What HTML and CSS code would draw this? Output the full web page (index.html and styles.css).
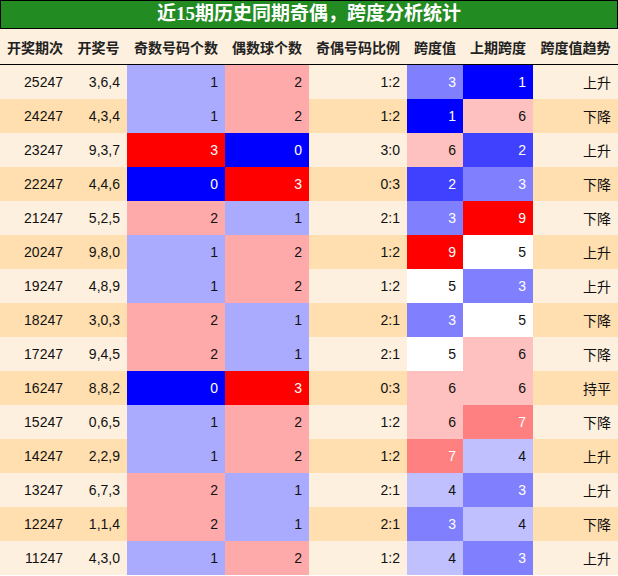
FILE: index.html
```html
<!DOCTYPE html>
<html lang="zh">
<head>
<meta charset="utf-8">
<title>近15期历史同期奇偶，跨度分析统计</title>
<link rel="stylesheet" href="styles.css">
</head>
<body>
<div class="title">近15期历史同期奇偶，跨度分析统计</div>
<table class="stats">
<colgroup>
<col class="w1"><col class="w2"><col class="w3"><col class="w4"><col class="w5"><col class="w6"><col class="w7"><col class="w8">
</colgroup>
<thead>
<tr><th>开奖期次</th><th>开奖号</th><th>奇数号码个数</th><th>偶数球个数</th><th>奇偶号码比例</th><th>跨度值</th><th>上期跨度</th><th>跨度值趋势</th></tr>
</thead>
<tbody>
<tr><td>25247</td><td>3,6,4</td><td class="n1">1</td><td class="n2">2</td><td>1:2</td><td class="s3">3</td><td class="s1">1</td><td>上升</td></tr>
<tr><td>24247</td><td>4,3,4</td><td class="n1">1</td><td class="n2">2</td><td>1:2</td><td class="s1">1</td><td class="s6">6</td><td>下降</td></tr>
<tr><td>23247</td><td>9,3,7</td><td class="n3">3</td><td class="n0">0</td><td>3:0</td><td class="s6">6</td><td class="s2">2</td><td>上升</td></tr>
<tr><td>22247</td><td>4,4,6</td><td class="n0">0</td><td class="n3">3</td><td>0:3</td><td class="s2">2</td><td class="s3">3</td><td>下降</td></tr>
<tr><td>21247</td><td>5,2,5</td><td class="n2">2</td><td class="n1">1</td><td>2:1</td><td class="s3">3</td><td class="s9">9</td><td>下降</td></tr>
<tr><td>20247</td><td>9,8,0</td><td class="n1">1</td><td class="n2">2</td><td>1:2</td><td class="s9">9</td><td class="s5">5</td><td>上升</td></tr>
<tr><td>19247</td><td>4,8,9</td><td class="n1">1</td><td class="n2">2</td><td>1:2</td><td class="s5">5</td><td class="s3">3</td><td>上升</td></tr>
<tr><td>18247</td><td>3,0,3</td><td class="n2">2</td><td class="n1">1</td><td>2:1</td><td class="s3">3</td><td class="s5">5</td><td>下降</td></tr>
<tr><td>17247</td><td>9,4,5</td><td class="n2">2</td><td class="n1">1</td><td>2:1</td><td class="s5">5</td><td class="s6">6</td><td>下降</td></tr>
<tr><td>16247</td><td>8,8,2</td><td class="n0">0</td><td class="n3">3</td><td>0:3</td><td class="s6">6</td><td class="s6">6</td><td>持平</td></tr>
<tr><td>15247</td><td>0,6,5</td><td class="n1">1</td><td class="n2">2</td><td>1:2</td><td class="s6">6</td><td class="s7">7</td><td>下降</td></tr>
<tr><td>14247</td><td>2,2,9</td><td class="n1">1</td><td class="n2">2</td><td>1:2</td><td class="s7">7</td><td class="s4">4</td><td>上升</td></tr>
<tr><td>13247</td><td>6,7,3</td><td class="n2">2</td><td class="n1">1</td><td>2:1</td><td class="s4">4</td><td class="s3">3</td><td>上升</td></tr>
<tr><td>12247</td><td>1,1,4</td><td class="n2">2</td><td class="n1">1</td><td>2:1</td><td class="s3">3</td><td class="s4">4</td><td>下降</td></tr>
<tr><td>11247</td><td>4,3,0</td><td class="n1">1</td><td class="n2">2</td><td>1:2</td><td class="s4">4</td><td class="s3">3</td><td>上升</td></tr>
</tbody>
</table>
</body>
</html>
```
FILE: styles.css
```css
html, body {
  margin: 0;
  padding: 0;
  background: #fff;
}
body {
  width: 618px;
  font-family: "Liberation Sans", "Noto Sans CJK SC", sans-serif;
  font-size: 14px;
  color: #111;
}
.title {
  box-sizing: border-box;
  height: 29px;
  background: #228b22;
  border: 1px solid #000;
  color: #fff;
  font-family: "Liberation Serif", "Noto Sans CJK SC", serif;
  font-weight: bold;
  font-size: 19px;
  line-height: 26px;
  text-align: center;
}
.stats {
  width: 618px;
  table-layout: fixed;
  border-collapse: collapse;
  border-spacing: 0;
}
.w1 { width: 70px; }
.w2 { width: 57px; }
.w3 { width: 98px; }
.w4 { width: 84px; }
.w5 { width: 98px; }
.w6 { width: 56px; }
.w7 { width: 70px; }
.w8 { width: 85px; }
.stats th {
  height: 35px;
  padding: 0;
  background: #fef0de;
  border-bottom: 1px solid #000;
  font-weight: bold;
  font-size: 14px;
  color: #222;
  text-align: center;
  white-space: nowrap;
}
.stats td {
  height: 34px;
  padding: 0 7px 0 0;
  text-align: right;
  white-space: nowrap;
}
.stats tbody tr:nth-child(odd) { background: #fef0de; }
.stats tbody tr:nth-child(even) { background: #ffdfb0; }
.n0 { background: #0000ff; color: #fff; }
.n1 { background: #aaaaff; }
.n2 { background: #ffaaaa; }
.n3 { background: #ff0000; color: #fff; }
.s1 { background: #0000ff; color: #fff; }
.s2 { background: #4040ff; color: #fff; }
.s3 { background: #8080ff; color: #fff; }
.s4 { background: #c0c0ff; }
.s5 { background: #ffffff; }
.s6 { background: #ffc0c0; }
.s7 { background: #ff8080; color: #fff; }
.s9 { background: #ff0000; color: #fff; }
```
